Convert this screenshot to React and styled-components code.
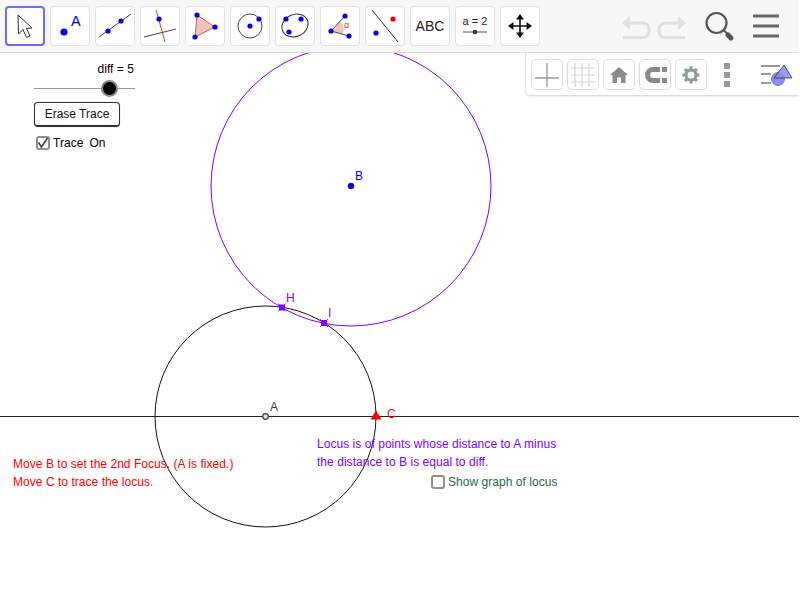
import styled, { createGlobalStyle } from 'styled-components'

const GlobalStyle = createGlobalStyle`
  html, body {
    margin: 0;
    padding: 0;
    background: #fff;
    overflow: hidden;
  }
  body {
    font-family: "Liberation Sans", Arial, sans-serif;
  }
`

const Page = styled.div`
  width: 799px;
  height: 600px;
  display: flex;
  flex-direction: column;
  background: #fff;
  overflow: hidden;
`

const Toolbar = styled.div`
  flex: 0 0 53px;
  box-sizing: border-box;
  display: flex;
  align-items: flex-start;
  padding: 6px 0 0 5px;
  gap: 5px;
  background: #f7f7f7;
  border-bottom: 1px solid #dcdcdc;
`

const ToolButton = styled.div`
  flex: 0 0 40px;
  height: 40px;
  box-sizing: border-box;
  background: #fff;
  border: ${p => (p.$active ? '2px solid #6b6bff' : '1px solid #e2e2e2')};
  border-radius: 4px;
  display: flex;
  align-items: center;
  justify-content: center;
`

const ToolbarRight = styled.div`
  margin-left: auto;
  height: 40px;
`

const Canvas = styled.div`
  position: relative;
  flex: 1;
  overflow: hidden;
`

const Drawing = styled.svg`
  position: absolute;
  left: 0;
  top: 0;
`

const StylePanel = styled.div`
  position: absolute;
  top: 0;
  right: 0;
  width: 274px;
  height: 43px;
  box-sizing: border-box;
  padding: 6px 0 0 5px;
  display: flex;
  gap: 4px;
  background: #fff;
  border-left: 1px solid #e4e4e4;
  border-bottom: 1px solid #dcdcdc;
  border-bottom-left-radius: 5px;
  box-shadow: 0 1px 2px rgba(0, 0, 0, 0.08);
`

const StyleButton = styled.div`
  width: 32px;
  height: 31px;
  box-sizing: border-box;
  border: 1px solid #dedede;
  border-radius: 5px;
  display: flex;
  align-items: center;
  justify-content: center;
`

const PanelIcon = styled.div`
  width: ${p => p.$w}px;
  height: 31px;
  margin-left: ${p => p.$ml || 0}px;
  display: flex;
  align-items: center;
  justify-content: center;
`

// the widgets sit on the geometry canvas, so these blocks are placed on it
const Floating = styled.div`
  position: absolute;
  left: ${p => p.$x}px;
  top: ${p => p.$y}px;
  display: flex;
  flex-direction: ${p => p.$row ? 'row' : 'column'};
  align-items: ${p => p.$row ? 'center' : 'stretch'};
  gap: ${p => p.$row ? 3 : 0}px;
  width: ${p => p.$w ? `${p.$w}px` : 'auto'};
`

const Text = styled.div`
  font-size: 12px;
  line-height: 18px;
  letter-spacing: 0.04px;
  color: ${p => p.$color || '#000'};
  white-space: nowrap;
`

const DiffText = styled(Text)`
  text-align: right;
  margin-right: 1px;
`

const Slider = styled.div`
  position: relative;
  height: 21px;
  &::before {
    content: "";
    position: absolute;
    left: 0;
    right: 0;
    top: 10px;
    height: 1px;
    background: #999;
  }
`

const Thumb = styled.div`
  position: absolute;
  left: 67px;
  top: 2px;
  width: 17px;
  height: 17px;
  box-sizing: border-box;
  border-radius: 50%;
  background: #000;
  border: 2.5px solid #8a8a8a;
`

const EraseButton = styled.div`
  margin-top: 3px;
  width: 86px;
  height: 25px;
  box-sizing: border-box;
  background: #fff;
  border: 1px solid #333;
  border-bottom-width: 2px;
  border-radius: 4px;
  box-shadow: 0 0 1px #999;
  font-size: 12px;
  line-height: 22px;
  text-align: center;
  color: #111;
`

const TraceRow = styled.div`
  margin: 6px 0 0 2px;
  display: flex;
  align-items: center;
  gap: 3px;
`

const OnText = styled(Text)`
  margin: 1px 0 0 3px;
`

const Check = styled.div`
  flex: 0 0 14px;
  height: 14px;
  box-sizing: border-box;
  border: 2px solid #8f8f8f;
  border-radius: 3px;
  background: #fff;
  display: flex;
  align-items: center;
  justify-content: center;
`

const blue = '#0000e6'
const purple = '#7f00ff'

const Point = ({ x, y, r = 2.6, fill = blue }) => <circle cx={x} cy={y} r={r} fill={fill} />

const CanvasLabel = ({ x, y, fill, children }) => (
  <text x={x} y={y} fill={fill} fontSize="12" fontFamily="Liberation Sans">{children}</text>
)

const tools = [
  <svg width="24" height="30" viewBox="0 0 24 30" key="move">
    <path d="M5 4 L5.5 23 L10 18.5 L13.5 26.5 L17 25 L13.5 17.5 L19 17 Z" fill="#fff" stroke="#333" strokeWidth="1" />
  </svg>,
  <svg width="38" height="38" viewBox="0 0 38 38" key="point">
    <circle cx="13" cy="25" r="3.6" fill={blue} />
    <text x="20" y="18.5" fontSize="14.5" fill={blue} fontFamily="Liberation Sans">A</text>
  </svg>,
  <svg width="38" height="38" viewBox="0 0 38 38" key="line">
    <line x1="3" y1="30" x2="35" y2="7" stroke="#444" />
    <Point x={12} y={24} />
    <Point x={25} y={14} />
  </svg>,
  <svg width="38" height="38" viewBox="0 0 38 38" key="perp">
    <line x1="15" y1="3" x2="24" y2="35" stroke="#f33" />
    <line x1="3" y1="30" x2="35" y2="22" stroke="#444" />
    <Point x={18} y={12} />
  </svg>,
  <svg width="38" height="38" viewBox="0 0 38 38" key="polygon">
    <path d="M11 8 L29 20 L9 30 Z" fill="#f2c4bd" stroke="#b5644f" />
    <Point x={11} y={8} />
    <Point x={29} y={20} />
    <Point x={9} y={30} />
  </svg>,
  <svg width="38" height="38" viewBox="0 0 38 38" key="circle">
    <circle cx="19" cy="19" r="12" fill="none" stroke="#444" />
    <Point x={19} y={19} />
    <Point x={28} y={12} />
  </svg>,
  <svg width="38" height="38" viewBox="0 0 38 38" key="ellipse">
    <ellipse cx="19" cy="18.5" rx="13.5" ry="11" fill="none" stroke="#333" transform="rotate(-25 19 18.5)" />
    <Point x={10} y={12} />
    <Point x={25} y={12} />
    <Point x={13} y={25} />
  </svg>,
  <svg width="38" height="38" viewBox="0 0 38 38" key="angle">
    <path d="M10 24 L19 14 A13 13 0 0 1 22 27 Z" fill="#f2c4bd" />
    <path d="M24 9 L10 24 L28 29" fill="none" stroke="#444" />
    <Point x={24} y={9} />
    <Point x={10} y={24} />
    <Point x={28} y={29} />
    <text x="23" y="21" fontSize="9" fill="#e33" fontFamily="Liberation Sans">α</text>
  </svg>,
  <svg width="38" height="38" viewBox="0 0 38 38" key="reflect">
    <line x1="6" y1="3" x2="32" y2="35" stroke="#333" />
    <Point x={27} y={12} fill="#e00" />
    <Point x={10} y={26} />
  </svg>,
  <svg width="38" height="38" viewBox="0 0 38 38" key="text">
    <text x="19" y="24" fontSize="14" fill="#222" textAnchor="middle" fontFamily="Liberation Sans">ABC</text>
  </svg>,
  <svg width="38" height="38" viewBox="0 0 38 38" key="slider">
    <text x="19" y="18" fontSize="11" fill="#222" textAnchor="middle" fontFamily="Liberation Sans">a = 2</text>
    <line x1="7" y1="25" x2="31" y2="25" stroke="#555" />
    <Point x={19} y={25} r={2.2} fill="#333" />
  </svg>,
  <svg width="28" height="28" viewBox="0 0 28 28" key="pan">
    <path d="M14 3 V25 M3 14 H25" stroke="#111" strokeWidth="1.6" />
    <path d="M14 2 L10 7.5 H18 Z M14 26 L10 20.5 H18 Z M2 14 L7.5 10 V18 Z M26 14 L20.5 10 V18 Z" fill="#111" />
  </svg>,
]

export default function App() {
  return (
    <Page>
      <GlobalStyle />
      <Toolbar>
        {tools.map((icon, i) => (
          <ToolButton key={i} $active={i === 0}>{icon}</ToolButton>
        ))}
        <ToolbarRight>
          <svg width="199" height="40" viewBox="0 0 199 40">
            <g fill="none" stroke="#e0e0e0" strokeWidth="3">
              <path d="M28 17 H42 Q49 17 49 24 V25 Q49 31.5 42 31.5 H23" />
              <path d="M80 17 H66 Q59 17 59 24 V25 Q59 31.5 66 31.5 H85" />
            </g>
            <path d="M22 17 L30 10 V24 Z M86 17 L78 10 V24 Z" fill="#e0e0e0" />
            <circle cx="116.5" cy="17" r="10" fill="none" stroke="#555" strokeWidth="2.2" />
            <line x1="123.5" y1="24" x2="128" y2="28.5" stroke="#555" strokeWidth="2" />
            <line x1="128" y1="29" x2="131" y2="32" stroke="#555" strokeWidth="5" strokeLinecap="round" />
            <path d="M153 10 H179 M153 20 H179 M153 30 H179" stroke="#666" strokeWidth="3" />
          </svg>
        </ToolbarRight>
      </Toolbar>
      <Canvas>
        <Drawing width="799" height="547" viewBox="0 53 799 547">
          <line x1="0" y1="416.5" x2="799" y2="416.5" stroke="#222" />
          <circle cx="351" cy="186" r="140" fill="none" stroke={purple} />
          <circle cx="265.5" cy="416.5" r="110.5" fill="none" stroke="#111" />
          <circle cx="351" cy="186" r="3" fill="#0000ff" stroke="#003" strokeWidth="0.5" />
          <circle cx="265.5" cy="416.5" r="2.8" fill="#ddd" stroke="#444" strokeWidth="1.3" />
          <path d="M376 410.5 L381.5 419.5 H370.5 Z" fill="#f00" />
          <rect x="279" y="304.5" width="6" height="6" fill={purple} />
          <rect x="321" y="320" width="6" height="6" fill={purple} />
          <path d="M278 303.5 L286 311.5 M286 303.5 L278 311.5 M320 319 L328 327 M328 319 L320 327" stroke={purple} strokeWidth="0.8" />
          <CanvasLabel x={355} y={180} fill="#0000ff">B</CanvasLabel>
          <CanvasLabel x={286} y={302} fill={purple}>H</CanvasLabel>
          <CanvasLabel x={328} y={317} fill={purple}>I</CanvasLabel>
          <CanvasLabel x={270} y={411} fill="#444">A</CanvasLabel>
          <CanvasLabel x={387} y={418} fill="#f00">C</CanvasLabel>
        </Drawing>
        <Floating $x={34} $y={7} $w={101}>
          <DiffText>diff = 5</DiffText>
          <Slider><Thumb /></Slider>
          <EraseButton>Erase Trace</EraseButton>
          <TraceRow>
            <Check>
              <svg width="10" height="10" viewBox="0 0 10 10" overflow="visible">
                <path d="M0.5 4.5 L3.5 9 L9.5 0" fill="none" stroke="#444" strokeWidth="1.7" />
              </svg>
            </Check>
            <Text>Trace</Text>
            <OnText>On</OnText>
          </TraceRow>
        </Floating>
        <Floating $x={317} $y={382}>
          <Text $color={purple}>Locus is of points whose distance to A minus</Text>
          <Text $color={purple}>the distance to B is equal to diff.</Text>
        </Floating>
        <Floating $x={13} $y={402}>
          <Text $color="#f00">Move B to set the 2nd Focus. (A is fixed.)</Text>
          <Text $color="#f00">Move C to trace the locus.</Text>
        </Floating>
        <Floating $x={431} $y={420} $row>
          <Check />
          <Text $color="#1f6b45">Show graph of locus</Text>
        </Floating>
        <StylePanel>
          <StyleButton>
            <svg width="28" height="28" viewBox="0 0 28 28">
              <path d="M2 17 H26 M14 2 V26" stroke="#999" strokeWidth="1.3" />
            </svg>
          </StyleButton>
          <StyleButton>
            <svg width="28" height="28" viewBox="0 0 28 28">
              <path d="M2 7 H26 M2 14 H26 M2 21 H26 M6 2 V26 M13 2 V26 M20 2 V26" stroke="#d6d6d6" strokeWidth="1.2" />
            </svg>
          </StyleButton>
          <StyleButton>
            <svg width="20" height="20" viewBox="0 0 20 20">
              <path d="M10 2 L19 10 H16.5 V18 H12 V12.5 H8 V18 H3.5 V10 H1 Z" fill="#8a8a8a" />
            </svg>
          </StyleButton>
          <StyleButton>
            <svg width="24" height="20" viewBox="0 0 24 20">
              <path d="M17 4.5 H10 A5.5 5.5 0 0 0 10 15.5 H17" fill="none" stroke="#8a8a8a" strokeWidth="5" />
              <path d="M19 2 H24 V7 H19 Z M19 13 H24 V18 H19 Z" fill="#8a8a8a" />
            </svg>
          </StyleButton>
          <StyleButton>
            <svg width="20" height="20" viewBox="0 0 20 20">
              <circle cx="10" cy="10" r="5" fill="none" stroke="#8a9a96" strokeWidth="3" />
              <path d="M10 1.5 V18.5 M1.5 10 H18.5 M4 4 L16 16 M16 4 L4 16" stroke="#8a9a96" strokeWidth="3" strokeDasharray="3.4 10.2" />
            </svg>
          </StyleButton>
          <PanelIcon $w={32}>
            <svg width="8" height="26" viewBox="0 0 8 26">
              <rect x="1" y="1" width="6" height="6" fill="#999" />
              <rect x="1" y="10" width="6" height="6" fill="#999" />
              <rect x="1" y="19" width="6" height="6" fill="#999" />
            </svg>
          </PanelIcon>
          <PanelIcon $w={36} $ml={12}>
            <svg width="36" height="28" viewBox="0 0 36 28">
              <path d="M2 5 H21 M2 13 H12 M2 22 H12" stroke="#999" strokeWidth="1.8" />
              <circle cx="19" cy="18" r="6.5" fill="#8c8cf2" stroke="#66a" strokeWidth="0.8" />
              <path d="M25 4 L33 17 H15 Z" fill="#8c8cf2" fillOpacity="0.85" stroke="#334" strokeWidth="0.8" />
            </svg>
          </PanelIcon>
        </StylePanel>
      </Canvas>
    </Page>
  )
}
